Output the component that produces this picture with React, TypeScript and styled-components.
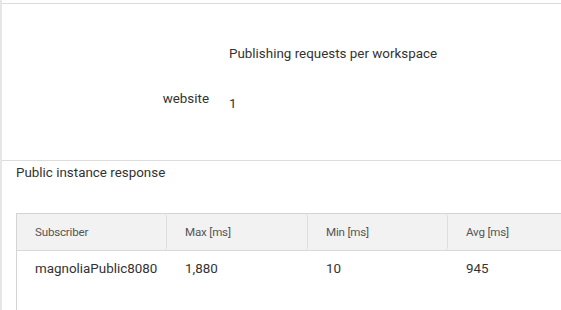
import React from "react";
import styled, { createGlobalStyle } from "styled-components";

const GlobalStyle = createGlobalStyle`
  html, body {
    margin: 0;
    padding: 0;
    background: #fff;
    overflow: hidden;
  }
  body {
    font-family: Roboto, "Liberation Sans", sans-serif;
    color: #333;
  }
`;

// data
const workspaces = [{ name: "website", count: "1" }];

const columns = [
  { key: "subscriber", label: "Subscriber", width: 150 },
  { key: "max", label: "Max [ms]", width: 141 },
  { key: "min", label: "Min [ms]", width: 140 },
  { key: "avg", label: "Avg [ms]", width: 120 },
];

const rows = [{ subscriber: "magnoliaPublic8080", max: "1,880", min: "10", avg: "945" }];

const App: React.FC = () => {
  return (
    <>
      <GlobalStyle />
      <Page>
        <WorkspacePanel>
          <Grid>
            <span />
            <Title>Publishing requests per workspace</Title>
            {workspaces.map((w) => (
              <React.Fragment key={w.name}>
                <Label>{w.name}</Label>
                <Value>{w.count}</Value>
              </React.Fragment>
            ))}
          </Grid>
        </WorkspacePanel>
        <ResponsePanel>
          <Caption>Public instance response</Caption>
          <Table>
            <HeaderRow>
              {columns.map((c) => (
                <HeaderCell key={c.key} $width={c.width}>
                  {c.label}
                </HeaderCell>
              ))}
            </HeaderRow>
            {rows.map((r) => (
              <BodyRow key={r.subscriber}>
                {columns.map((c) => (
                  <BodyCell key={c.key} $width={c.width}>
                    {r[c.key as keyof typeof r]}
                  </BodyCell>
                ))}
              </BodyRow>
            ))}
          </Table>
        </ResponsePanel>
      </Page>
    </>
  );
};

export default App;

const Page = styled.div`
  width: 561px;
  height: 310px;
  border-left: 2px solid #e6e6e6;
  box-sizing: border-box;
  overflow: hidden;
`;

const WorkspacePanel = styled.div`
  margin-top: 3px;
  border-top: 1px solid #dcdcdc;
  border-bottom: 1px solid #dcdcdc;
  height: 158px;
  box-sizing: border-box;
`;

const Grid = styled.div`
  display: grid;
  grid-template-columns: 207px auto;
  column-gap: 20px;
  row-gap: 27px;
  padding-top: 41px;
`;

const Title = styled.div`
  font-size: 13.4px;
  line-height: 18px;
  color: #333;
`;

const Label = styled.div`
  text-align: right;
  font-size: 13.4px;
  line-height: 18px;
  color: #333;
`;

const Value = styled.div`
  font-size: 13.4px;
  line-height: 18px;
  padding-top: 5px;
  color: #333;
`;

const ResponsePanel = styled.div`
  padding-left: 14px;
  height: 149px;
  overflow: hidden;
`;

const Caption = styled.div`
  font-size: 13.4px;
  line-height: 18px;
  padding-top: 3px;
  color: #333;
`;

const Table = styled.div`
  margin-top: 31px;
  border-top: 1px solid #d4d4d4;
  border-left: 1px solid #d4d4d4;
  height: 120px;
`;

const HeaderRow = styled.div`
  display: flex;
  background: #f2f2f2;
  border-bottom: 1px solid #d9d9d9;
  height: 36px;
`;

const HeaderCell = styled.div<{ $width: number }>`
  flex: 0 0 ${(p) => p.$width}px;
  box-sizing: border-box;
  padding-left: 18px;
  display: flex;
  align-items: center;
  font-size: 11.6px;
  color: #555;
  letter-spacing: -0.2px;
  border-right: 1px solid #dedede;
  border-radius: 0 3px 3px 0;
`;

const BodyRow = styled.div`
  display: flex;
  height: 34px;
`;

const BodyCell = styled.div<{ $width: number }>`
  flex: 0 0 ${(p) => p.$width}px;
  box-sizing: border-box;
  padding-left: 18px;
  display: flex;
  align-items: center;
  font-size: 13.4px;
  color: #333;
`;
